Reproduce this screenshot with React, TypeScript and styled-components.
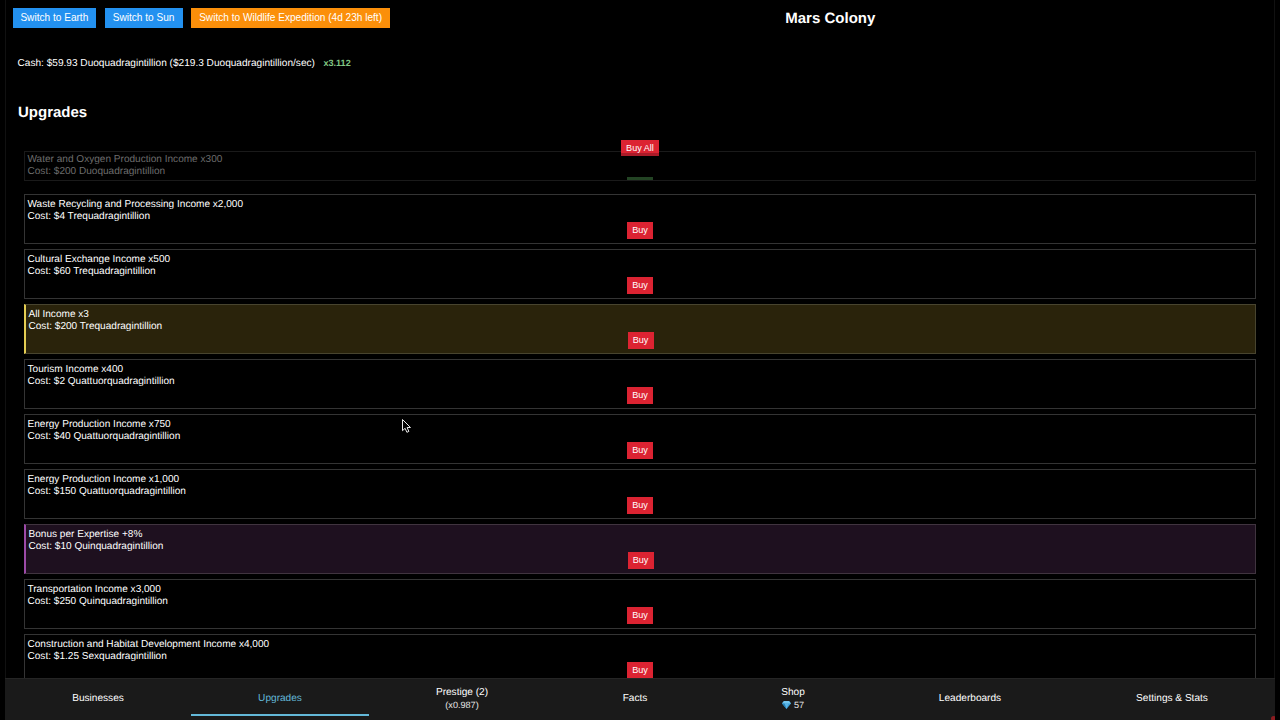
import React from 'react';
import styled, { createGlobalStyle, css } from 'styled-components';

type Tone = 'plain' | 'gold' | 'violet';

const GlobalStyle = createGlobalStyle`
  * { box-sizing: border-box; }
  body {
    margin: 0;
    background: #000;
    color: #fff;
    font-family: "Liberation Sans", Arial, Helvetica, sans-serif;
    font-size: 10px;
    overflow: hidden;
    text-rendering: geometricPrecision;
  }
`;

const Page = styled.div`
  display: flex;
  flex-direction: column;
  position: relative;
  height: 720px;
  margin: 0 5px;
  overflow: hidden;
`;

const Content = styled.main`
  display: flex;
  flex-direction: column;
  flex: 1;
  min-height: 0;
  border: solid #111;
  border-width: 0 1px;
`;

const Header = styled.header`
  display: flex;
  align-items: center;
  height: 20px;
  margin: 8px 0 0 6.6px;
`;

const SwitchButton = styled.button<{ $color: string; $width: number }>`
  width: ${(p) => p.$width}px;
  height: 20px;
  margin: 0 8.5px 0 0;
  padding: 0 0 1px;
  border: 0;
  background: ${(p) => p.$color};
  color: #fff;
  font: 10.1px/19px "Liberation Sans", Arial, sans-serif;
  white-space: nowrap;
`;

const Title = styled.h1`
  flex: 1;
  margin: 2px 0 0 -12px;
  font-size: 15px;
  line-height: 20px;
  text-align: center;
`;

const CashLine = styled.div`
  display: flex;
  align-items: center;
  height: 12px;
  margin: 30px 0 0 11.5px;
  font-size: 10.1px;
  line-height: 12px;
`;

const Multiplier = styled.strong`
  margin: -2px 0 0 8.5px;
  color: #81c784;
  font-size: 9.1px;
`;

const SectionTitle = styled.h2`
  margin: 33px 0 0 12px;
  font-size: 15px;
  line-height: 19px;
`;

const UpgradeList = styled.section`
  display: flex;
  flex-direction: column;
  flex: 1;
  min-height: 0;
  padding: 18px 18px 0;
  overflow: hidden;
`;

const BuyButton = styled.button`
  flex: none;
  width: 26px;
  height: 17px;
  padding: 0;
  border: 0;
  background: #dc2332;
  color: #fff;
  font: 9.1px/17px "Liberation Sans", Arial, sans-serif;
`;

const BuyAllButton = styled(BuyButton)`
  position: relative;
  align-self: center;
  width: 38px;
  height: 16px;
  margin-bottom: -5px;
  box-shadow: inset 0 -3px #ab1b28;
  line-height: 16px;
`;

const tones: Record<Tone, ReturnType<typeof css>> = {
  plain: css``,
  gold: css`
    border-color: #48442f;
    border-left: 2px solid #e3cc52;
    background: #2a230b;
  `,
  violet: css`
    border-color: #40343f;
    border-left: 2px solid #9c4aa8;
    background: #1e101f;
  `,
};

const UpgradeCard = styled.article<{ $tone: Tone }>`
  display: flex;
  flex-direction: column;
  flex: none;
  height: 50px;
  margin-bottom: 5px;
  padding: 4px 2.5px 0;
  border: 1px solid #343434;
  ${(p) => tones[p.$tone]}

  ${BuyButton} {
    align-self: center;
    margin-top: -1px;
  }
`;

const FadingCard = styled.article`
  display: flex;
  flex-direction: column;
  flex: none;
  height: 30px;
  margin-bottom: 13px;
  padding: 2px 2.5px 0;
  border: 1px solid #1a1a1a;
  color: #6c6c6c;
`;

const FadingButton = styled.span`
  flex: none;
  align-self: center;
  width: 26px;
  height: 3px;
  margin-top: -1px;
  background: #234424;
`;

const CardText = styled.p`
  margin: 0;
  font-size: 10.07px;
  line-height: 12px;
  white-space: nowrap;
`;

const Nav = styled.nav`
  display: grid;
  grid-template-columns: 186px 178px 186px 160px 156px 198px 206px;
  flex: none;
  height: 42px;
  border-top: 1px solid #252525;
  background: #1a1a1a;
`;

const Tab = styled.a<{ $active?: boolean }>`
  display: flex;
  flex-direction: column;
  align-items: center;
  justify-content: center;
  height: 37px;
  padding-top: 3px;
  color: ${(p) => (p.$active ? '#63b8d8' : '#fff')};
  border-bottom: 2px solid ${(p) => (p.$active ? '#63b8d8' : 'transparent')};
  font-size: 10.1px;
  line-height: 13px;
`;

const TabDetail = styled.span`
  display: flex;
  align-items: center;
  gap: 3px;
  font-size: 9.1px;
  line-height: 12px;
  color: #e8e8e8;
`;

const AlertDot = styled.i`
  position: absolute;
  right: -1px;
  bottom: -1px;
  width: 5px;
  height: 5px;
  border-radius: 50%;
  background: #8c1c20;
`;

const Cursor = styled.svg`
  position: absolute;
  left: 396px;
  top: 418px;
`;

const Gem = () => (
  <svg width="9" height="8" viewBox="0 0 18 16">
    <path d="M4 0h10l4 5-9 11L0 5z" fill="#3b9fd8" />
    <path d="M4 0h10l4 5H0z" fill="#72c5ee" />
    <path d="M5 5h8L9 16z" fill="#5ab4e5" />
    <path d="M0 5h5l4 11z" fill="#2682b8" />
  </svg>
);

const upgrades: { name: string; cost: string; tone?: Tone }[] = [
  { name: 'Waste Recycling and Processing Income x2,000', cost: '$4 Trequadragintillion' },
  { name: 'Cultural Exchange Income x500', cost: '$60 Trequadragintillion' },
  { name: 'All Income x3', cost: '$200 Trequadragintillion', tone: 'gold' },
  { name: 'Tourism Income x400', cost: '$2 Quattuorquadragintillion' },
  { name: 'Energy Production Income x750', cost: '$40 Quattuorquadragintillion' },
  { name: 'Energy Production Income x1,000', cost: '$150 Quattuorquadragintillion' },
  { name: 'Bonus per Expertise +8%', cost: '$10 Quinquadragintillion', tone: 'violet' },
  { name: 'Transportation Income x3,000', cost: '$250 Quinquadragintillion' },
  { name: 'Construction and Habitat Development Income x4,000', cost: '$1.25 Sexquadragintillion' },
];

export default function App() {
  return (
    <>
      <GlobalStyle />
      <Page>
        <Content>
          <Header>
            <SwitchButton $color="#2391f0" $width={83.5}>Switch to Earth</SwitchButton>
            <SwitchButton $color="#2391f0" $width={78}>Switch to Sun</SwitchButton>
            <SwitchButton $color="#fb8f0a" $width={199}>Switch to Wildlife Expedition (4d 23h left)</SwitchButton>
            <Title>Mars Colony</Title>
          </Header>
          <CashLine>
            Cash: $59.93 Duoquadragintillion ($219.3 Duoquadragintillion/sec)
            <Multiplier>x3.112</Multiplier>
          </CashLine>
          <SectionTitle>Upgrades</SectionTitle>
          <UpgradeList>
            <BuyAllButton>Buy All</BuyAllButton>
            <FadingCard>
              <CardText>Water and Oxygen Production Income x300</CardText>
              <CardText>Cost: $200 Duoquadragintillion</CardText>
              <FadingButton />
            </FadingCard>
            {upgrades.map((u) => (
              <UpgradeCard key={u.name} $tone={u.tone ?? 'plain'}>
                <CardText>{u.name}</CardText>
                <CardText>Cost: {u.cost}</CardText>
                <BuyButton>Buy</BuyButton>
              </UpgradeCard>
            ))}
          </UpgradeList>
        </Content>
        <Nav>
          <Tab>Businesses</Tab>
          <Tab $active>Upgrades</Tab>
          <Tab>Prestige (2)<TabDetail>(x0.987)</TabDetail></Tab>
          <Tab>Facts</Tab>
          <Tab>Shop<TabDetail><Gem />57</TabDetail></Tab>
          <Tab>Leaderboards</Tab>
          <Tab>Settings &amp; Stats</Tab>
        </Nav>
        <AlertDot />
        <Cursor width="11" height="16" viewBox="0 0 11 16">
          <path d="M1.5 1.5v11.2l2.6-2.4 1.8 4 2-.9-1.8-3.9h3.4z" fill="#000" stroke="#e8e8e8" strokeWidth="1" />
        </Cursor>
      </Page>
    </>
  );
}
